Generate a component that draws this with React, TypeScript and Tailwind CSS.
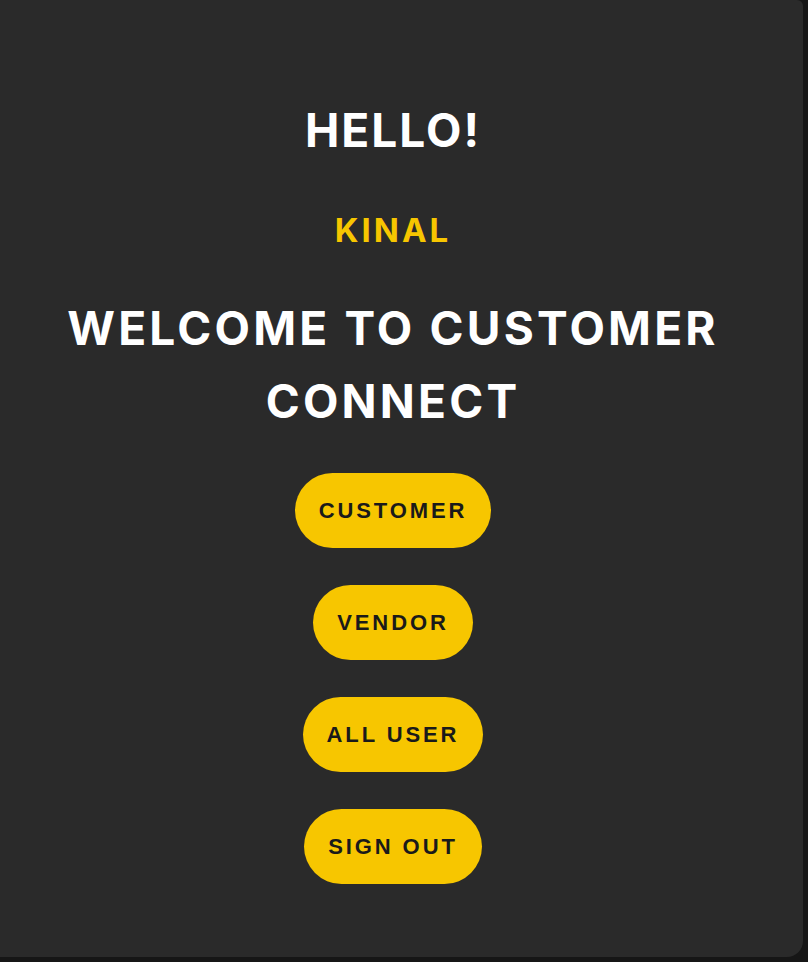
import React from "react";

export default function App() {
  const labels = ["CUSTOMER", "VENDOR", "ALL USER", "SIGN OUT"];
  return (
    <div className="w-[808px] h-[962px] bg-[#161616] overflow-hidden">
      <div className="w-[803px] h-[957px] bg-[#2a2a2a] rounded-br-[16px] rounded-tr-[6px] flex flex-col items-center pt-[102px] pr-[17px]">
        <h1 className="font-['Inter'] text-white text-[46px] leading-[56px] font-bold tracking-[2px]">
          HELLO!
        </h1>
        <h2 className="font-['Inter'] mt-[52px] text-[#f7c600] text-[33px] leading-[40px] font-bold tracking-[3px]">
          KINAL
        </h2>
        <h3 className="font-['Inter'] mt-[42px] text-white text-[46px] leading-[73px] font-bold tracking-[3.2px] text-center w-[700px]">
          WELCOME TO CUSTOMER CONNECT
        </h3>
        <div className="mt-[35px] flex flex-col items-center gap-[37px]">
          {labels.map((l) => (
            <button
              key={l}
              className="font-['Liberation_Sans'] h-[75px] px-[24px] rounded-full bg-[#f7c600] text-[#1a1a1a] text-[22px] font-bold tracking-[2.9px]"
            >
              {l}
            </button>
          ))}
        </div>
      </div>
    </div>
  );
}
